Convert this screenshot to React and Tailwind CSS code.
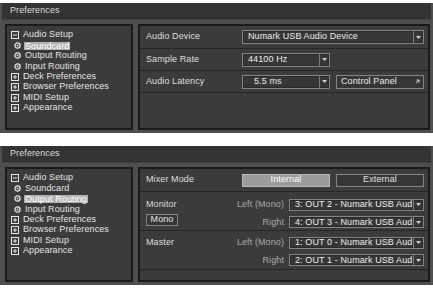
import React from "react";

const BoxIcon = ({ open }) => (
  <svg width="8" height="8" viewBox="0 0 8 8" className="shrink-0">
    <rect x="0.5" y="0.5" width="7" height="7" fill="none" stroke="#e6e6e6" strokeWidth="1" />
    <line x1="2" y1="4" x2="6" y2="4" stroke="#e6e6e6" strokeWidth="1" />
    {!open && <line x1="4" y1="2" x2="4" y2="6" stroke="#e6e6e6" strokeWidth="1" />}
  </svg>
);

const DotIcon = () => (
  <svg width="7" height="7" viewBox="0 0 7 7" className="shrink-0">
    <circle cx="3.5" cy="3.5" r="2.6" fill="none" stroke="#e6e6e6" strokeWidth="1.3" />
    <circle cx="3.5" cy="3.5" r="0.9" fill="#e6e6e6" />
  </svg>
);

const Tree = ({ selected }) => {
  const subs = ["Soundcard", "Output Routing", "Input Routing"];
  const groups = ["Deck Preferences", "Browser Preferences", "MIDI Setup", "Appearance"];
  return (
    <div className="w-[128px] h-full bg-[#3b3b3b] border-2 border-[#1b1b1b] pt-[4px] pl-[4px] text-[#e4e4e4]">
      <div className="flex items-center gap-[4px] h-[10.4px]">
        <BoxIcon open />
        <span>Audio Setup</span>
      </div>
      {subs.map((s) => (
        <div key={s} className="flex items-center gap-[3px] h-[10.4px] pl-[3px]">
          <DotIcon />
          <span className={s === selected ? "bg-[#b2b2b2] text-white px-[1px] leading-[8px]" : "px-[1px]"}>{s}</span>
        </div>
      ))}
      {groups.map((g) => (
        <div key={g} className="flex items-center gap-[4px] h-[10.4px]">
          <BoxIcon />
          <span>{g}</span>
        </div>
      ))}
    </div>
  );
};

const Arrow = () => (
  <div className="w-[10px] h-full border-l border-[#7a7a7a] flex items-center justify-center">
    <svg width="5" height="3" viewBox="0 0 5 3">
      <path d="M0 0 H5 L2.5 3 Z" fill="#cfcfcf" />
    </svg>
  </div>
);

const Drop = ({ text, w, h = "h-[14px]", pad = "pl-[5px]" }) => (
  <div className={`${w} ${h} flex items-center border border-[#858585] bg-[#363636] shadow-[inset_0_0_0_1px_#2a2a2a]`}>
    <span className={`flex-1 ${pad} whitespace-nowrap text-[#ececec]`}>{text}</span>
    <Arrow />
  </div>
);

const Window = ({ selected, height, children }) => (
  <div className={`${height} bg-[#4e4e4e] pl-[2px] pr-[2px] pb-[2px] flex flex-col`}>
    <div className="h-[17px] shrink-0 bg-[#333333] border-b border-[#3f3f3f] flex items-center pl-[8px] text-[#dcdcdc]">
      Preferences
    </div>
    <div className="flex-1 flex gap-[5px] pt-[4px] pl-[3px] pr-[1px] pb-[1px] min-h-0">
      <Tree selected={selected} />
      <div className="flex-1 bg-[#3b3b3b] border-2 border-[#1b1b1b] flex flex-col">{children}</div>
    </div>
  </div>
);

export default function App() {
  return (
    <div className="w-[433px] h-[288px] bg-white pt-[3px] font-['Liberation_Sans',Arial,sans-serif] text-[9px] tracking-[0.1px] flex flex-col gap-[13px] overflow-hidden">
      <Window selected="Soundcard" height="h-[130px]">
        <div className="h-[23px] flex items-center border-b border-[#262626]">
          <span className="w-[102px] pl-[6px] text-[#dedede]">Audio Device</span>
          <Drop text="Numark USB Audio Device" w="w-[182px]" />
        </div>
        <div className="h-[22px] flex items-center border-b border-[#262626]">
          <span className="w-[102px] pl-[6px] text-[#dedede]">Sample Rate</span>
          <Drop text="44100 Hz" w="w-[88px]" />
        </div>
        <div className="h-[22px] flex items-center border-b border-[#262626]">
          <span className="w-[102px] pl-[6px] text-[#dedede]">Audio Latency</span>
          <Drop text="5.5 ms" w="w-[88px]" pad="pl-[11px]" />
          <div className="ml-[6px] w-[88px] h-[14px] flex items-center justify-between border border-[#858585] bg-[#363636] pl-[4px] pr-[3px] text-[#ececec]">
            <span>Control Panel</span>
            <svg width="5" height="5" viewBox="0 0 5 5">
              <path d="M1 4 L4 1 M1.5 1 H4 V3.5" stroke="#d8d8d8" strokeWidth="1" fill="none" />
            </svg>
          </div>
        </div>
      </Window>

      <Window selected="Output Routing" height="h-[139px]">
        <div className="h-[23px] shrink-0 flex items-center border-b border-[#262626]">
          <span className="w-[102px] pl-[6px] text-[#dedede]">Mixer Mode</span>
          <div className="w-[88px] h-[13px] flex items-center justify-center bg-[#9b9b9b] border border-[#b8b8b8] text-white">Internal</div>
          <div className="ml-[6px] w-[88px] h-[13px] flex items-center justify-center bg-[#363636] border border-[#858585] text-[#e4e4e4]">External</div>
        </div>
        {[
          { name: "Monitor", mono: true, a: "3: OUT 2 - Numark USB Aud", b: "4: OUT 3 - Numark USB Aud", pt: "pt-[6px]" },
          { name: "Master", mono: false, a: "1: OUT 0 - Numark USB Aud", b: "2: OUT 1 - Numark USB Aud", pt: "pt-[5px]" },
        ].map((s) => (
          <div key={s.name} className={`h-[39px] shrink-0 flex border-b border-[#262626] ${s.pt}`}>
            <div className="w-[90px] pl-[6px] flex flex-col">
              <span className="text-[#dedede] leading-[12px]">{s.name}</span>
              {s.mono && (
                <div className="mt-[4px] w-[32px] h-[12px] flex items-center justify-center border border-[#858585] bg-[#363636] text-[#e4e4e4]">Mono</div>
              )}
            </div>
            <div className="flex-1 flex flex-col gap-[4px]">
              <div className="flex items-center">
                <span className="w-[54px] text-right text-[#a9a9a9]">Left (Mono)</span>
                <div className="ml-[5px]"><Drop text={s.a} w="w-[135px]" h="h-[12px]" /></div>
              </div>
              <div className="flex items-center">
                <span className="w-[54px] text-right text-[#a9a9a9]">Right</span>
                <div className="ml-[5px]"><Drop text={s.b} w="w-[135px]" h="h-[12px]" /></div>
              </div>
            </div>
          </div>
        ))}
      </Window>
    </div>
  );
}
